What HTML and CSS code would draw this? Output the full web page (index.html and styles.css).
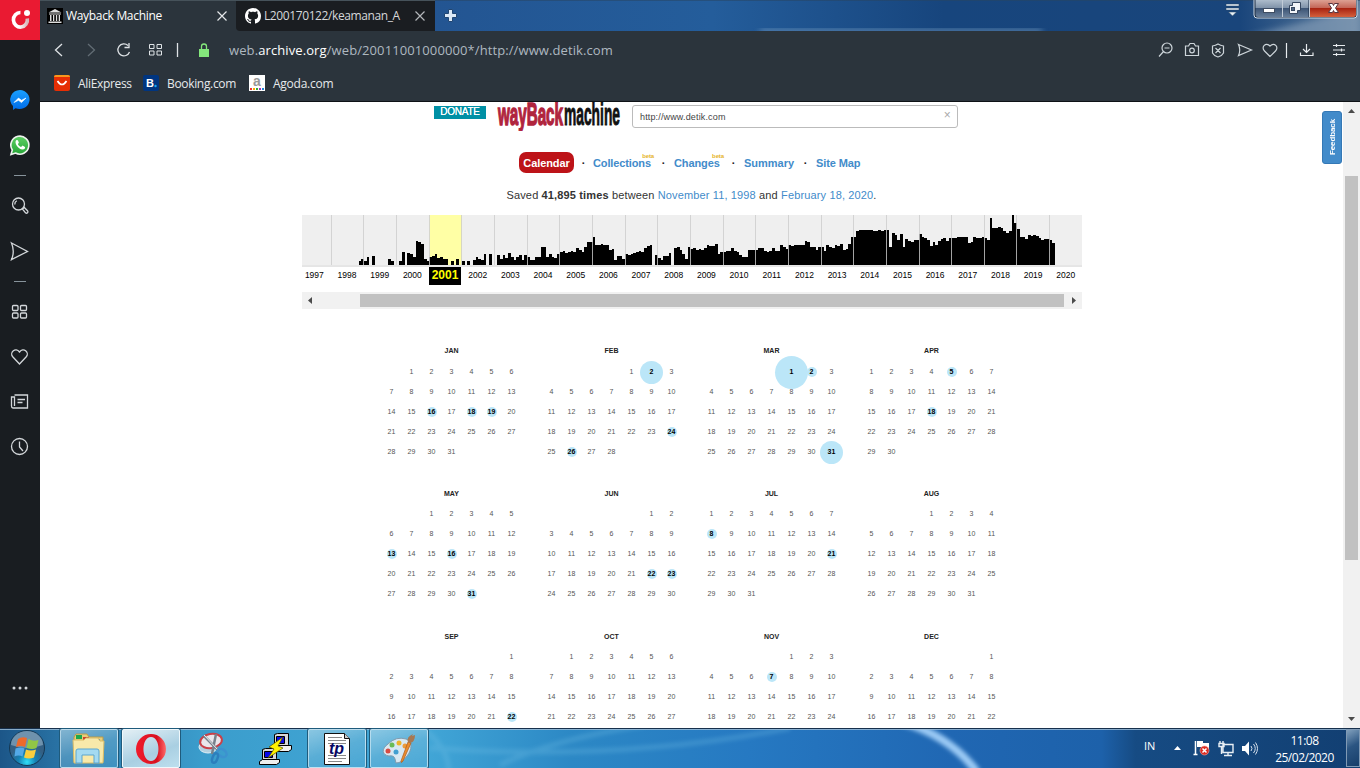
FILE: index.html
```html
<!DOCTYPE html>
<html lang="en">
<head>
<meta charset="utf-8">
<title>Wayback Machine</title>
<link rel="stylesheet" href="styles.css">
</head>
<body>
<div class="screen">
  <div class="browser">
    <aside class="side">
      <div class="opera"><svg width="40" height="40" viewBox="0 0 40 40"><defs><linearGradient id="og" x1="0" x2="1"><stop offset=".4" stop-color="#fff"/><stop offset="1" stop-color="#d8b6bb"/></linearGradient></defs><path d="M20.500 12.500A7 7.300 0 1 0 27.300 18.500" fill="none" stroke="url(#og)" stroke-width="3.600"/><circle cx="27" cy="13" r="3" fill="#fff"/></svg></div>
      <svg class="rail" width="40" height="688" viewBox="0 40 40 688" fill="none" stroke="#d3d7da" stroke-width="1.3">
        <defs><linearGradient id="mg" x2="0" y2="1"><stop stop-color="#1aa0ff"/><stop offset="1" stop-color="#006be8"/></linearGradient><linearGradient id="wg" x2="0" y2="1"><stop stop-color="#5fd065"/><stop offset="1" stop-color="#25a536"/></linearGradient></defs>
        <path d="M20 90a10 9.500 0 1 1-4.500 18.200L13 110v-4A10 9.500 0 0 1 20 90Z" fill="url(#mg)" stroke="none"/>
        <path d="M14 102.500l4.500-4.500 3 2.300 4.500-2.300-4.500 4.600-3-2.300Z" fill="#fff" stroke="#fff" stroke-width=".6"/>
        <path d="M11 154.500l1.300-4.500A9 9 0 1 1 15.500 153Z" fill="url(#wg)" stroke="#eef3ee" stroke-width="1.6"/>
        <path d="M16.500 140c-3 2 1.500 9.500 6 9.500 2 0 3-1.500 2.500-2.500l-2.500-1.400-1.400 1.400c-1.600-.5-2.800-1.800-3.200-3l1-1.200-1-2.600Z" fill="#fff" stroke="none"/>
        <path d="M14 175.500h12M14 281.500h12" stroke="#87939b" stroke-width="1"/>
        <circle cx="18.500" cy="204" r="6"/><path d="M14.800 204.500a4 4 0 0 1 2-3.800M22.500 209l1.800-1.500 3.200 3.300a1.300 1.300 0 0 1-2 2Z"/>
        <path d="M11.500 243l16 8.500-16 8q3.500-8 0-16.500Z"/>
        <rect x="12.500" y="305.500" width="5.500" height="5" rx="1"/><rect x="20.500" y="305.500" width="6" height="5" rx="1"/><rect x="12.500" y="313" width="5.500" height="5" rx="1"/><rect x="20.500" y="313" width="6" height="5" rx="1"/>
        <path d="M19.500 364l-7-7.500c-3-4 3-10 7-4.500 4-5.500 10 .5 7 4.500Z"/>
        <path d="M14.500 395h13v13H13q-1.500 0-1.500-2v-9h3v9M17.500 399.500h7.500M17.500 402.500h5"/>
        <circle cx="19.500" cy="446.500" r="8"/><path d="M19.500 441.500v5.500l3.500 4"/>
        <g fill="#d3d7da" stroke="none"><circle cx="14" cy="688" r="1.500"/><circle cx="20" cy="688" r="1.500"/><circle cx="26" cy="688" r="1.500"/></g>
      </svg>
    </aside>
    <div class="window">
      <div class="tabs">
        <div class="tab active"><svg class="fav" width="16" height="16" viewBox="0 0 16 16"><path d="M0 0h16v16H0Z" fill="#000"/><path d="M1.500 4.500L8 1l6.500 3.500ZM2 5.500h12v1H2ZM3 7h1.500v6H3ZM6 7h1.300v6H6ZM8.900 7h1.300v6H8.900ZM11.700 7h1.300v6h-1.300ZM1.500 13.500h13V15h-13Z" fill="#ddd"/></svg><span class="tt t1">Wayback Machine</span><svg class="x" width="10" height="10"><path d="M.5 .5l9 9M9.500 .5l-9 9" stroke="#e5e8ea" stroke-width="1.200"/></svg></div>
        <div class="tab idle"><svg class="fav" width="16" height="16" viewBox="0 0 16 16"><path fill="#fff" d="M8 0C3.580 0 0 3.580 0 8c0 3.540 2.290 6.530 5.470 7.590.4.070.55-.17.55-.38 0-.19-.01-.82-.01-1.490-2.010.37-2.530-.49-2.690-.94-.09-.23-.48-.94-.82-1.130-.28-.15-.68-.52-.01-.53.63-.01 1.080.58 1.230.82.72 1.210 1.870.87 2.330.66.07-.52.28-.87.51-1.070-1.780-.2-3.640-.89-3.640-3.950 0-.87.31-1.590.82-2.150-.08-.2-.36-1.020.08-2.120 0 0 .67-.21 2.200.82.640-.18 1.320-.27 2-.27s1.360.09 2 .27c1.530-1.040 2.200-.82 2.200-.82.440 1.100.16 1.920.08 2.120.51.560.82 1.270.82 2.150 0 3.070-1.870 3.750-3.650 3.950.29.25.54.730.54 1.480 0 1.070-.01 1.930-.01 2.200 0 .21.15.46.55.38A8 8 0 0 0 16 8c0-4.420-3.580-8-8-8Z"/></svg><span class="tt t2">L200170122/keamanan_A</span><svg class="x" width="10" height="10"><path d="M.5 .5l9 9M9.500 .5l-9 9" stroke="#b3b7ba" stroke-width="1.200"/></svg></div>
        <svg class="aero" width="925" height="31" viewBox="435 0 925 31">
          <defs><linearGradient id="sky"><stop stop-color="#235592"/><stop offset=".3" stop-color="#245d9b"/><stop offset=".55" stop-color="#17457d"/><stop offset=".87" stop-color="#19457b"/><stop offset="1" stop-color="#617f9e"/></linearGradient><filter id="soft"><feGaussianBlur stdDeviation="3"/></filter>
          <linearGradient id="btn" x2="0" y2="1"><stop stop-color="#adbccb"/><stop offset=".45" stop-color="#8194aa"/><stop offset=".5" stop-color="#3d5575"/><stop offset="1" stop-color="#687f9b"/></linearGradient><linearGradient id="red" x2="0" y2="1"><stop stop-color="#dda093"/><stop offset=".45" stop-color="#c46759"/><stop offset=".5" stop-color="#a92412"/><stop offset="1" stop-color="#d4603c"/></linearGradient></defs>
          <path d="M435 0h925v31H435Z" fill="url(#sky)"/>
          <path d="M760 29h282v5H760Z" fill="#6f97bd" filter="url(#soft)" opacity=".8"/>
          <path d="M1240 38l120-30v30Z" fill="#8ba3bb" filter="url(#soft)" opacity=".6"/>
          <path d="M435 .5h925" stroke="#294560" opacity=".5"/>
          <path d="M448.500 9.500h4v4h4v4h-4v4h-4v-4h-4v-4h4Z" fill="#dce9f6" stroke="#204673"/>
          <path d="M1226 4h13v2h-13ZM1226 8h13v2h-13ZM1228.500 12h8l-4 4Z" fill="#e8f0f4" stroke="#254363" stroke-width=".5"/>
          <path d="M1254-3v18q0 3 3 3h97q3 0 3-3V-3Z" fill="#182a42" stroke="#d0dbe6"/>
          <path d="M1255.500 0h26.500v17h-24q-2.500 0-2.500-2Z" fill="url(#btn)"/><path d="M1283 0h25.500v17H1283Z" fill="url(#btn)"/><path d="M1310 0h46v15q0 2-2.500 2H1310Z" fill="url(#red)"/>
          <path d="M1282.500 0v17M1309.500 0v17" stroke="#c1ccd8"/>
          <rect x="1263.500" y="8.500" width="11" height="4" fill="#fff" stroke="#3f4d62"/>
          <path d="M1292.500 2.500h8v8h-3v3h-8v-8h3Z" fill="#f2f5f8" stroke="#374860"/><rect x="1291.500" y="7.500" width="3" height="3" fill="#526986" stroke="#374860"/>
          <path d="M1328.500 3.500h4l1 2 1-2h4l-3 4.500 3 4.500h-4l-1-2-1 2h-4l3-4.500Z" fill="#fff" stroke="#5b3640"/>
        </svg>
      </div>
      <div class="address">
        <svg width="150" height="39" viewBox="40 31 150 39" fill="none" stroke="#dfe3e6" stroke-width="1.300"><path d="M62 44l-6.500 6 6.500 6"/><path d="M88 44l6.500 6-6.500 6" stroke="#626c74"/><path d="M128 45.500a6 6 0 1 0 1.500 6.500M129 43v4.500h-4.500"/><path d="M149.500 44.500h4.500v4h-4.500ZM157 44.500h4.500v4H157ZM149.500 51h4.500v4h-4.500ZM157 51h4.500v4H157Z" stroke-width="1"/><path d="M177.500 43v14"/></svg>
        <svg class="lock" width="12" height="15"><path d="M1 6h10v8H1Z" fill="#84e77c"/><path d="M3.500 6V3.500a2.500 2.500 0 0 1 5 0V6" fill="none" stroke="#84e77c" stroke-width="1.300"/></svg>
        <span class="url">web.<b>archive.org</b>/web/20011001000000*/http://www.detik.com</span>
        <svg class="tools" width="210" height="39" viewBox="1150 31 210 39" fill="none" stroke="#cdd5da" stroke-width="1.200"><circle cx="1167" cy="48" r="5"/><path d="M1164.500 48h5M1163.500 51.500l-4.500 5"/><path d="M1185.500 46h3l1.500-2.500h4l1.500 2.500h3v9.500h-13Z"/><circle cx="1192" cy="50.500" r="2.300"/><path d="M1212.500 46q3-.5 5.500-2 2.500 1.500 5.500 2v7q-1.500 3-5.500 4-4-1-5.500-4ZM1215.500 48l5 5M1220.500 48l-5 5"/><path d="M1238.500 44.500l13 5.500-13 5.500q2.500-5.500 0-11Z"/><path d="M1270 56.500l-5.500-5.500c-4-4 1.500-9.500 5.500-5 4-4.500 9.500 1 5.500 5Z"/><path d="M1286.500 43v15M1306.500 44v8M1303 49l3.500 3.500 3.500-3.500M1300.500 52.500v3h12.500v-3M1333 45.500h12M1333 50h12M1333 54.500h12M1336.500 44v3M1341.500 48.500v3M1336.500 53v3" stroke="#e8ecef"/></svg>
      </div>
      <div class="bookmarks">
        <svg width="16" height="16"><rect width="16" height="16" rx="2" fill="#e62e04"/><path d="M0 2q0-2 2-2h12q2 0 2 2Z" fill="#f7971d"/><path d="M3.500 6q4.500 7 9 0" fill="none" stroke="#fff" stroke-width="1.700"/></svg><span class="b1">AliExpress</span>
        <svg width="16" height="16"><rect width="16" height="16" rx="2" fill="#003580"/><text x="3" y="12" font-size="11" class="ico" fill="#fff">B</text><circle cx="12.500" cy="11" r="1.200" fill="#17a9f5"/></svg><span class="b2">Booking.com</span>
        <svg width="16" height="16"><path d="M0 0h16v16H0Z" fill="#fff"/><text x="4" y="11" font-size="14" class="ico" fill="#999">a</text><path d="M1 13h2v2H1Z" fill="#e33"/><path d="M4 13h2v2H4Z" fill="#fa0"/><path d="M7 13h2v2H7Z" fill="#3a3"/><path d="M10 13h2v2h-2Z" fill="#93b"/><path d="M13 13h2v2h-2Z" fill="#28d"/></svg><span class="b3">Agoda.com</span>
      </div>
      <div class="view">
        <main class="page">
          <header class="head">
            <span class="donate">DONATE</span>
            <svg class="logo" width="124" height="29" viewBox="0 0 124 29"><g transform="scale(1 1.880)" class="ico" font-size="17"><text x="1" y="12" textLength="65" lengthAdjust="spacingAndGlyphs" fill="#b0243d" stroke="#b0243d" stroke-width=".8">wayBack</text><text x="67" y="12" textLength="56" lengthAdjust="spacingAndGlyphs" fill="#111" stroke="#111" stroke-width=".5">machine</text></g></svg>
            <div class="field"><span>http://www.detik.com</span><span class="clear">×</span></div>
          </header>
          <nav class="nav">
            <span class="pill">Calendar</span><i>·</i><span class="n1">Collections<sup>beta</sup></span><i>·</i><span class="n2">Changes<sup>beta</sup></span><i>·</i><span class="n3">Summary</span><i>·</i><span class="n4">Site Map</span>
          </nav>
          <p class="saved">Saved <b>41,895 times</b> between <a>November 11, 1998</a> and <a>February 18, 2020</a>.</p>
          <div class="timeline">
            <svg id="spark" width="780" height="52" viewBox="302 215 780 52"></svg>
            <div class="years" id="years"></div>
            <div class="hscroll"><svg width="17" height="17"><path d="M10 5v7L6 8.500Z" fill="#4b4b4b"/></svg><div class="hthumb"></div><svg width="17" height="17"><path d="M7 5v7l4-3.500Z" fill="#4b4b4b"/></svg></div>
          </div>
          <div class="calendar" id="calendar"></div>
          <div class="feedback"><span>Feedback</span></div>
        </main>
        <div class="vscroll"><svg width="17" height="17"><path d="M5 11h7L8.500 7Z" fill="#4b4b4b"/></svg><div class="vthumb"></div><svg width="17" height="17"><path d="M5 6h7l-3.500 4Z" fill="#4b4b4b"/></svg></div>
      </div>
    </div>
  </div>
  <footer class="taskbar">
    <svg class="wall" width="1360" height="40" viewBox="0 728 1360 40">
      <defs><linearGradient id="tb"><stop stop-color="#1c5688"/><stop offset=".05" stop-color="#2b77a9"/><stop offset=".15" stop-color="#3b9dcc"/><stop offset=".31" stop-color="#42a7d7"/><stop offset=".42" stop-color="#2c88c5"/><stop offset=".55" stop-color="#2679c2"/><stop offset=".7" stop-color="#2067b3"/><stop offset=".81" stop-color="#1d61aa"/><stop offset=".835" stop-color="#164b83"/><stop offset="1" stop-color="#123f72"/></linearGradient><filter id="b2"><feGaussianBlur stdDeviation="2"/></filter></defs>
      <path d="M0 728h1360v40H0Z" fill="url(#tb)"/>
      <path d="M902 722q48 14 75 50" fill="none" stroke="#9bcaf5" stroke-width="8" filter="url(#b2)"/>
      <path d="M430 748q190 14 360-20M500 765q50-25 145-40M425 730q25 20 24 45" fill="none" stroke="#72bfe5" stroke-width="5" opacity=".3" filter="url(#b2)"/>
      <path d="M0 728.500h1360" stroke="#17304c"/><path d="M0 729.500h1360" stroke="#a1bfd8" opacity=".8"/>
    </svg>
    <div class="start"><svg width="38" height="38" viewBox="0 0 38 38"><defs><radialGradient id="orb" cy=".9"><stop stop-color="#30e0f8"/><stop offset=".5" stop-color="#1581b5"/><stop offset="1" stop-color="#335f83"/></radialGradient></defs><circle cx="19" cy="19" r="17.500" fill="url(#orb)" stroke="#143854"/><path d="M3 16a16 14 0 0 1 32 0q-16 6-32 0Z" fill="#b8d1df" opacity=".45"/><path d="M10 10q4-3 9-1l-2 9q-4-2-9 0Z" fill="#ed6a2b"/><path d="M20.500 10q5 3 10 1l-2 8q-4 2-10 0Z" fill="#91c746"/><path d="M7.500 19.500q5-2 9 0l-2 8q-4-2-8 0Z" fill="#54a9e7"/><path d="M18 20.500q5 2 10 0l-2 8q-5 2-10 0Z" fill="#fbce3d"/></svg></div>
    <div class="task"><svg width="36" height="34" viewBox="72 733 36 34"><path d="M75 738l2-3h11l2 3h14v25H75Z" fill="#e7cd7a" stroke="#b79b4b"/><path d="M77 736h6v4h-6Z" fill="#1da84c"/><path d="M84 738h6v4h-6Z" fill="#ce432f"/><path d="M93 740h8v4h-8Z" fill="#318cd4"/><path d="M74 741h11l2-2h12l2 3h4l-1 22H75Z" fill="#f8e9aa" stroke="#d9bc68"/><path d="M77 752q0-2 2-2h19q2 0 2 2v12h-5v-8H83v8h-6Z" fill="#a4daf1" stroke="#5aa6d0"/></svg></div>
    <div class="task lit"><svg width="34" height="34" viewBox="134 731 34 34"><defs><linearGradient id="or"><stop stop-color="#f01b2c"/><stop offset=".7" stop-color="#d8101f"/><stop offset="1" stop-color="#ff6b6b"/></linearGradient></defs><path fill-rule="evenodd" fill="url(#or)" d="M151 733a15 15 0 1 0 0 30 15 15 0 1 0 0-30Zm0 3c10 0 10 24 0 24s-10-24 0-24Z"/></svg></div>
    <div class="task plain"><svg width="36" height="36" viewBox="195 730 36 36" fill="none"><ellipse cx="208" cy="746" rx="9" ry="6" fill="#b3d1e0" stroke="#e1eff6"/><ellipse cx="211" cy="740" rx="11" ry="7" fill="#e9e7eb" stroke="#c94148" stroke-width="2" transform="rotate(-10 211 740)"/><path d="M204 735l15 15M216 733l-4 20" stroke="#77828b" stroke-width="2.500"/><path d="M204 734l14 15" stroke="#eef1f3"/><ellipse cx="222" cy="752" rx="5" ry="3.500" transform="rotate(35 222 752)" stroke="#3c92cf" stroke-width="2.500"/><ellipse cx="215" cy="757" rx="2.500" ry="5" transform="rotate(20 215 757)" stroke="#2c7fbd" stroke-width="2.500"/></svg></div>
    <div class="task plain"><svg width="34" height="34" viewBox="258 731 34 34"><g stroke="#000"><path d="M274.500 733.500l3-1h11v11l-2 3h-12Z" fill="#d7d7d7"/><path d="M276.500 735.500h8v7h-8Z" fill="#0808e8"/><path d="M270.500 747.500l3-3h18v4l-3 2h-18Z" fill="#eee"/><path d="M262.500 748.500l3-1h11v10l-2 3h-12Z" fill="#d7d7d7"/><path d="M264.500 750.500h8v6h-8Z" fill="#0808e8"/><path d="M259.500 760.500l3-2h17v3l-3 2h-17Z" fill="#eee"/></g><path d="M283 736l-14 10 5 2-6 9 15-10-5-2Z" fill="#fff200" stroke="#514d00" stroke-width=".7"/></svg></div>
    <div class="task"><svg width="28" height="34" viewBox="323 731 28 34"><path d="M324.500 732.500h20l5 5v26h-25Z" fill="#fff" stroke="#111"/><path d="M344.500 732.500v5h5" fill="#ccc" stroke="#111"/><path d="M328 736.500h14M328 739.500h18M328 742.500h18M328 754.500h18M328 757.500h18M328 760.500h14" stroke="#888"/><path d="M328 744h20v9h-20Z" fill="#fff"/><text x="329" y="753" font-size="16" class="tp" fill="#060663">tp</text></svg></div>
    <div class="task"><svg width="36" height="36" viewBox="382 730 36 36"><path d="M389 743q8-8 18-5c7 2 6 11 1 17q-5 7-11 7l-1-4q-1-4-6-3c-7-1-8-7-1-12Z" fill="#d8e8f2" stroke="#819bad"/><circle cx="393" cy="744" r="2.500" fill="#69bb56"/><circle cx="400" cy="742" r="2.500" fill="#eeb42c"/><circle cx="389" cy="750" r="2.500" fill="#d84b42"/><circle cx="406" cy="745" r="2.500" fill="#ed9a39"/><circle cx="397" cy="751" r="2.500" fill="#419fd1"/><path d="M409 741l3 1-8 18q-2 3-2 0Z" fill="#ed8c2b" stroke="#a85a20" stroke-width=".7"/><path d="M409 741q-2-5 5-8l-1 2 3-1q0 7-5 8Z" fill="#a77853"/></svg></div>
    <div class="tray">
      <span class="lang">IN</span>
      <svg width="90" height="38" viewBox="1170 730 90 38"><path d="M1174 751h7l-3.500-4Z" fill="#fff"/><path d="M1195.500 742v13M1193.500 755.500h4" stroke="#fff" stroke-width="1.500"/><path d="M1197 742h6v2h6v6h-5v-2h-7Z" fill="#fff"/><circle cx="1204.500" cy="751.500" r="4.500" fill="#db2d24" stroke="#f5aaa2" stroke-width=".6"/><path d="M1202.500 749.500l4 4M1206.500 749.500l-4 4" stroke="#fff" stroke-width="1.500"/><path d="M1223 745.500h10v8h-10ZM1228 753v3M1224 756.500h8M1220 742v3M1223 742v3M1219 744.500h5v3h-5ZM1221.500 748v7" fill="none" stroke="#e8eef4" stroke-width="1.400"/><path d="M1242 747h3l4-4.500v14l-4-4.500h-3Z" fill="#fff"/><path d="M1251 747q2 2.500 0 5M1253.500 745q3.500 4.500 0 9M1255.500 743.500q4 6 0 12" fill="none" stroke="#d6e0ec"/></svg>
      <div class="clock"><span>11:08</span><span class="date">25/02/2020</span></div>
      <div class="peek"></div>
    </div>
  </footer>
</div>
<script src="app.js"></script>
</body>
</html>
```
FILE: styles.css
```css
* { box-sizing: border-box; }
body { margin: 0; overflow: hidden; font-family: "Liberation Sans", Arial, sans-serif; }
svg { display: block; flex: none; }
.ico { font-family: "Liberation Sans", sans-serif; font-weight: bold; }
.tp { font-family: "Liberation Sans", sans-serif; font-weight: bold; font-style: italic; }
.screen { width: 1360px; height: 768px; display: flex; flex-direction: column; overflow: hidden; }
.browser { height: 728px; display: flex; }
.side { width: 40px; background: #191d21; }
.opera { height: 40px; background: #ea1a32; }
.window { width: 1320px; display: flex; flex-direction: column; background: #2b343c; }
.tabs { height: 31px; display: flex; font-family: "Open Sans", sans-serif; font-size: 12px; color: #fff; }
.tab { display: flex; align-items: center; border-top: 1px solid #46525a; white-space: nowrap; }
.active { width: 196px; padding-left: 7px; background: #2b343c; }
.idle { width: 199px; padding-left: 9px; background: #1a1d21; color: #d6d8da; border-radius: 0 0 0 4px; }
.tt { margin-left: 3px; line-height: 16px; padding-bottom: 1px; }
.t1 { width: 151px; letter-spacing: -.32px; }
.t2 { width: 151px; margin-left: 3px; letter-spacing: -.4px; }
.address { height: 39px; display: flex; align-items: center; }
.lock { margin-left: 8px; }
.url { flex: none; margin-left: 19px; width: 921px; padding-bottom: 1px; font: 13px "Open Sans", sans-serif; letter-spacing: .1px; color: #aeb8c0; white-space: nowrap; }
.url b { font-weight: normal; color: #fff; }
.bookmarks { height: 32px; padding: 0 0 5px 14px; display: flex; align-items: center; border-bottom: 1px solid #0e1216; font: 12px "Open Sans", sans-serif; color: #e6e9eb; }
.bookmarks span { margin-left: 8px; white-space: nowrap; letter-spacing: -.33px; }
.bookmarks .b1 { width: 65px; }
.bookmarks .b2 { width: 82px; }
.bookmarks .b3 { letter-spacing: -.25px; }
.view { height: 626px; display: flex; background: #fff; }
.page { position: relative; width: 1303px; height: 626px; overflow: hidden; background: #fff; }
.head { height: 50px; padding-left: 394px; display: flex; align-items: flex-start; }
.donate { width: 52px; height: 13px; margin-top: 4px; background: #0090a5; color: #fff; font-size: 10px; line-height: 12px; text-align: center; text-shadow: 0 0 .5px #fff; letter-spacing: -.25px; }
.logo { margin-left: 11px; }
.field { width: 326px; height: 23px; margin: 3px 0 0 11px; padding: 0 6px 0 7px; border: 1px solid #bbb; border-radius: 3px; display: flex; justify-content: space-between; font-size: 9px; line-height: 22px; color: #444; letter-spacing: .15px; }
.clear { font-size: 12px; line-height: 18px; color: #aaa; }
.nav { height: 21px; padding-left: 479px; display: flex; align-items: center; font-size: 11px; font-weight: bold; color: #428bca; white-space: nowrap; }
.nav > span { position: relative; }
.nav i { width: 19px; text-align: center; color: #222; font-style: normal; }
.nav .pill { width: 55px; height: 21px; line-height: 22px; text-align: center; background: #bd1318; color: #fff; border-radius: 7px; letter-spacing: -.1px; }
.n1 { width: 60px; letter-spacing: -.12px; }
.n2 { width: 49px; letter-spacing: -.1px; }
.n3 { width: 51px; }
.n4 { letter-spacing: -.1px; }
.n1 + i, .n2 + i, .n3 + i { width: 21px; }
.nav sup { position: absolute; right: -1px; top: -4px; font-size: 6px; line-height: 6px; color: #e5b52d; }
.saved { margin: 15px 0 0 466.5px; height: 15px; font-size: 11px; line-height: 15px; letter-spacing: .14px; color: #333; white-space: nowrap; }
.saved a { color: #428bca; }
.timeline { width: 780px; margin: 12px 0 0 262px; }
.years { width: 788px; height: 18px; margin: 0 0 0 -4px; display: grid; grid-template-columns: repeat(24, 32.680px); font-size: 8.500px; line-height: 17px; text-align: center; color: #000; }
.years .on { background: #000; color: #ff0; font-weight: bold; font-size: 12px; line-height: 17px; }
.hscroll { height: 17px; margin-top: 7px; display: flex; align-items: center; background: #f1f1f1; }
.hthumb { width: 704px; height: 13px; margin: 0 1px 0 41px; background: #c1c1c1; }
.calendar { width: 640px; margin: 34px 0 0 341.5px; display: grid; grid-template-columns: repeat(4, 160px); grid-auto-rows: 143px; }
.month { width: 140px; }
.name { height: 18px; font-size: 7px; font-weight: bold; line-height: 15px; text-align: center; color: #222; }
.month:nth-child(-n+4) .name { height: 19px; }
.days { display: grid; grid-template-columns: repeat(7, 20px); grid-auto-rows: 20px; font-size: 7px; text-align: center; line-height: 20px; color: #555; }
.day { display: grid; grid-template: 20px / 20px; place-items: center; }
.day span, .dot { grid-area: 1 / 1; }
.day span { z-index: 1; }
.dot { width: 10px; height: 10px; border-radius: 50%; background: #bbe6f8; }
.m { width: 23px; height: 23px; margin: -2px; }
.l { width: 33px; height: 33px; margin: -7px; }
.hit { color: #000; font-weight: bold; }
.feedback { position: absolute; left: 1282px; top: 9px; width: 20px; height: 53px; background: #428bca; border: 1px solid #3478b5; border-radius: 3px; display: grid; place-items: center; color: #fff; font-size: 8px; font-weight: bold; letter-spacing: -.1px; }
.feedback span { writing-mode: vertical-rl; transform: rotate(180deg); }
.vscroll { width: 17px; display: flex; flex-direction: column; align-items: center; justify-content: flex-start; background: #f1f1f1; }
.vthumb { flex: none; width: 13px; height: 384px; margin: 57px 0 151px; background: #c1c1c1; }
.taskbar { position: relative; width: 1360px; height: 40px; padding-top: 1px; display: flex; align-items: flex-start; }
.wall { position: absolute; left: 0; top: 0; z-index: -1; }
.start { width: 60px; padding-left: 8px; }
.task { width: 58px; height: 39px; margin-right: 4px; display: grid; place-items: center; background: linear-gradient(160deg, #bddfed99, #83bfdc66 50%, #5cacd555); border: 1px solid #dbeff8b0; border-radius: 2px; box-shadow: 0 0 0 1px #1f5b7c; }
.lit { background: linear-gradient(160deg, #e3eff5, #a9cfe2 60%, #bddfee); border-color: #f1f8fb; }
.plain { background: none; border-color: transparent; box-shadow: none; }
.tray { width: 218px; margin-left: auto; display: flex; font-family: "Open Sans", sans-serif; color: #fff; }
.lang { width: 28px; flex: none; padding-left: 2px; font-size: 11px; line-height: 33px; }
.clock { flex: none; width: 85px; padding: 3px 0 0 4px; display: flex; flex-direction: column; align-items: center; font-size: 12px; line-height: 17px; letter-spacing: -.5px; }
.peek { flex: none; width: 14px; height: 38px; margin-left: 1px; background: linear-gradient(150deg, #81a0bd, #2b5582 45%, #173e6a); border: 1px solid #809ab5; }
```
FILE: app.js
```js
// Monthly capture counts as bar heights in pixels, 1998 to 2020
const captures = [
  [0,0,0,0,0,0,0,0,0,0,4,6],
  [4,8,0,9,0,0,0,0,0,6,4,0],
  [0,4,13,0,12,11,8,24,23,21,6,4],
  [8,9,11,7,8,6,6,0,4,0,6,0],
  [4,0,4,0,5,8,6,5,11,0,11,0],
  [0,10,6,10,7,12,8,5,8,10,5,10],
  [8,5,5,8,8,18,18,8,11,8,7,11],
  [13,14,12,13,14,13,17,15,13,18,23,23],
  [28,20,20,21,20,20,15,16,5,9,9,6],
  [11,10,11,12,13,14,13,17,19,20,0,10],
  [7,5,9,9,12,0,17,18,15,11,6,18],
  [16,17,15,16,15,17,20,19,19,21,11,13],
  [13,14,14,17,14,13,10,8,8,15,15,15],
  [15,17,17,14,13,14,17,14,14,20,18,16],
  [20,19,20,20,20,20,24,23,18,18,15,18],
  [18,14,20,18,17,20,19,21,15,16,21,28],
  [28,34,35,35,35,35,35,34,34,35,34,35],
  [35,18,32,30,25,31,18,26,24,23,25,25],
  [31,28,27,25,19,23,20,24,26,27,24,27],
  [27,27,28,28,28,28,22,23,28,27,27,28],
  [27,25,47,37,37,38,37,34,32,34,50,42],
  [36,28,28,26,30,29,30,29,27,25,26,26],
  [25,22]
];
const pitch = 32.65, origin = 331.3;
let out = '<path d="M302 215h780v50H302Z" fill="#efefef"/><path d="M429.500 215h32.500v50h-32.500Z" fill="#ffffa5"/>';
captures.forEach((row, y) => row.forEach((h, m) => {
  if (!h) return;
  const a = Math.round(origin + y * pitch + m * pitch / 12);
  const b = Math.round(origin + y * pitch + (m + 1) * pitch / 12);
  out += `<rect x="${a}" y="${265 - h}" width="${b - a}" height="${h}" fill="#000"/>`;
}));
for (let y = 0; y < 23; y++) {
  out += `<rect x="${Math.floor(origin + y * pitch)}" y="215" width="1" height="50" fill="#ccc" opacity=".8"/>`;
}
out += '<path d="M302 266h780" stroke="#ccc" stroke-width="1"/>';
document.getElementById('spark').innerHTML = out;

let labels = '';
for (let y = 1997; y <= 2020; y++) labels += `<span${y === 2001 ? ' class="on"' : ''}>${y}</span>`;
document.getElementById('years').innerHTML = labels;

const names = ['JAN','FEB','MAR','APR','MAY','JUN','JUL','AUG','SEP','OCT','NOV','DEC'];
const hits = [
  {16:'s',18:'s',19:'s'}, {2:'m',24:'s',26:'s'}, {1:'l',2:'s',31:'m'}, {5:'s',18:'s'},
  {13:'s',16:'s',31:'s'}, {22:'s',23:'s'}, {8:'s',21:'s'}, {}, {22:'s'}, {}, {7:'s'}, {}
];
// The last row of months runs past the fold, so only its visible weeks are built
const visible = [0,0,0,0,0,0,0,0,22,27,24,22];
let html = '';
names.forEach((name, m) => {
  const first = new Date(2001, m, 1).getDay();
  const count = visible[m] || new Date(2001, m + 1, 0).getDate();
  html += `<section class="month"><div class="name">${name}</div><div class="days">` + '<div></div>'.repeat(first);
  for (let d = 1; d <= count; d++) {
    const size = hits[m][d];
    html += `<div class="day${size ? ' hit' : ''}">${size ? `<div class="dot ${size}"></div>` : ''}<span>${d}</span></div>`;
  }
  html += '</div></section>';
});
document.getElementById('calendar').innerHTML = html;
```
